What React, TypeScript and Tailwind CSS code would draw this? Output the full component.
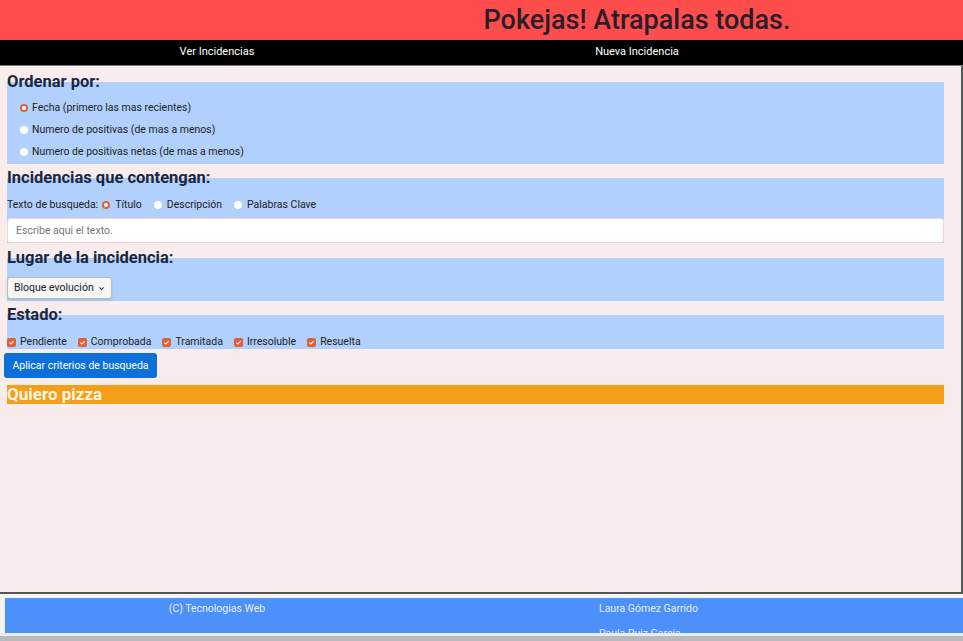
import React from 'react';

const Radio = ({ checked }: { checked?: boolean }) => (
  <span
    className={`inline-block w-[8px] h-[8px] rounded-full shrink-0 ${
      checked ? 'bg-white border-[2.5px] border-[#e0603c]' : 'bg-white'
    }`}
  />
);

const Check = () => (
  <span className="inline-flex items-center justify-center w-[9px] h-[9px] rounded-[2px] bg-[#dd603c] shrink-0">
    <svg viewBox="0 0 10 10" className="w-[7px] h-[7px]">
      <path d="M2 5.2 L4.2 7.2 L8 3" fill="none" stroke="white" strokeWidth="1.6" />
    </svg>
  </span>
);

const Section = ({ title, children }: { title: string; children: React.ReactNode }) => (
  <fieldset className="bg-[#b1d0fc] mr-[17px]">
    <legend className="text-[16.5px] leading-[20px] font-bold text-[#1b2740]">{title}</legend>
    {children}
  </fieldset>
);

const ESTADOS = ['Pendiente', 'Comprobada', 'Tramitada', 'Irresoluble', 'Resuelta'];

export default function App() {
  return (
    <div className="w-[963px] h-[641px] overflow-hidden bg-[#b9b9c0] text-[10.5px]" style={{ fontFamily: 'Roboto, "Liberation Sans", sans-serif' }}>
      {/* Header */}
      <header className="h-[40px] bg-[#ff4d4d] grid grid-cols-[420px_420px] pl-[7px] items-center">
        <div />
        <h1 className="text-[27px] leading-[30px] font-medium text-[#2a1d28] text-center whitespace-nowrap">Pokejas! Atrapalas todas.</h1>
      </header>

      {/* Nav */}
      <nav className="h-[26px] bg-black border-b border-[#777] grid grid-cols-[420px_420px] pl-[7px] items-center text-white text-[11px]">
        <a href="#" className="text-center">Ver Incidencias</a>
        <a href="#" className="text-center">Nueva Incidencia</a>
      </nav>

      {/* Main */}
      <main className="h-[528px] bg-[#f8ecec] border-r-2 border-b-2 border-[#555] pl-[7px] pt-[6px] text-[#222]">
        <Section title="Ordenar por:">
          <div className="flex flex-col gap-[8px] pl-[13px] pt-[9px] pb-[5px]">
            <label className="flex items-center gap-[4px] h-[14px]"><Radio checked />Fecha (primero las mas recientes)</label>
            <label className="flex items-center gap-[4px] h-[14px]"><Radio />Numero de positivas (de mas a menos)</label>
            <label className="flex items-center gap-[4px] h-[14px]"><Radio />Numero de positivas netas (de mas a menos)</label>
          </div>
        </Section>

        <div className="h-[4px]" />
        <Section title="Incidencias que contengan:">
          <div className="flex items-center h-[14px] mt-[10px] mb-[6px]">
            <span className="mr-[4px]">Texto de busqueda:</span>
            <label className="flex items-center gap-[5px] mr-[12px]"><Radio checked />Título</label>
            <label className="flex items-center gap-[5px] mr-[12px]"><Radio />Descripción</label>
            <label className="flex items-center gap-[5px]"><Radio />Palabras Clave</label>
          </div>
          <input
            className="block w-full h-[25px] bg-white border border-[#f0d6d6] rounded-[3px] px-[8px] text-[10.5px] placeholder:text-[#777]"
            placeholder="Escribe aqui el texto."
          />
        </Section>

        <div className="h-[5px]" />
        <Section title="Lugar de la incidencia:">
          <div className="pt-[9px] pb-[2px]">
            <div className="inline-flex items-center gap-[4px] h-[22px] px-[6px] bg-[#f6f6f6] border border-[#bbb] rounded-[3px] text-[#222] shadow-sm">
              Bloque evolución
              <svg viewBox="0 0 10 10" className="w-[7px] h-[7px]">
                <path d="M2 3.5 L5 6.5 L8 3.5" fill="none" stroke="#333" strokeWidth="1.5" />
              </svg>
            </div>
          </div>
        </Section>

        <div className="h-[4px]" />
        <Section title="Estado:">
          <div className="flex items-center h-[14px] mt-[10px] text-[10.5px]">
            {ESTADOS.map(e => (
              <label key={e} className="flex items-center gap-[4px] mr-[11px]"><Check />{e}</label>
            ))}
          </div>
        </Section>

        <button className="block mt-[4px] -ml-[3px] h-[25px] w-[153px] bg-[#0d6fd8] text-white rounded-[3px] text-[10.5px]">
          Aplicar criterios de busqueda
        </button>

        <div className="mt-[7px] mr-[17px] h-[19px] bg-[#f59f18] text-[#fff6e6] text-[17px] font-bold leading-[19px]">
          Quiero pizza
        </div>
      </main>

      {/* Footer */}
      <div className="bg-[#f4f4f4] pt-[4px]">
        <footer className="h-[35px] ml-[5px] bg-[#4c90fc] grid grid-cols-[420px_1fr] pl-[2px] text-[#e6eefc] overflow-hidden">
          <p className="text-center pt-[3px]">(C) Tecnologias Web</p>
          <ul className="pl-[172px] pt-[3px] flex flex-col gap-[9px]">
            <li>Laura Gómez Garrido</li>
            <li>Paula Ruiz Garcia</li>
          </ul>
        </footer>
        <div className="h-[3px] bg-[#e9ede6]" />
      </div>
    </div>
  );
}
